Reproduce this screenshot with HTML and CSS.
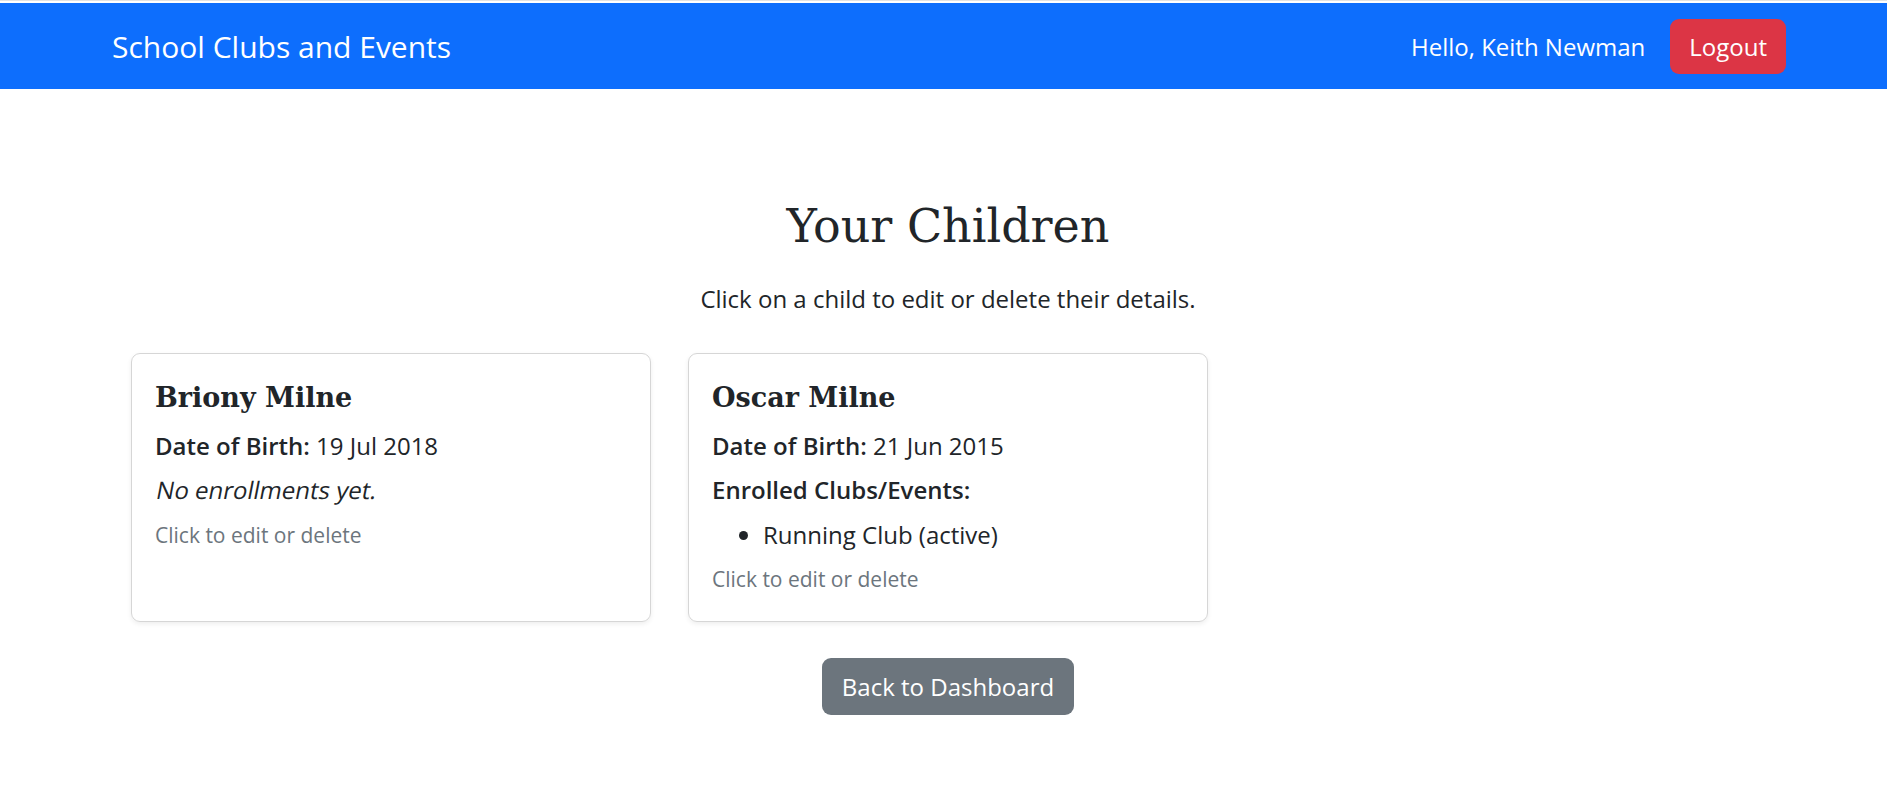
FILE: index.html
```html
<!DOCTYPE html>
<html lang="en">
<head>
<meta charset="utf-8">
<title>Your Children - School Clubs and Events</title>
<link rel="stylesheet" href="styles.css">
</head>
<body>
<nav class="navbar">
  <a class="brand" href="#">School Clubs and Events</a>
  <div class="nav-right">
    <span class="hello">Hello, Keith Newman</span>
    <button class="btn btn-danger">Logout</button>
  </div>
</nav>
<main class="container">
  <h1 class="page-title">Your Children</h1>
  <p class="lead">Click on a child to edit or delete their details.</p>
  <div class="cards">
    <div class="card">
      <h4 class="card-title">Briony Milne</h4>
      <p class="line"><strong>Date of Birth:</strong> 19 Jul 2018</p>
      <p class="line"><em class="slant">No enrollments yet.</em></p>
      <p class="hint">Click to edit or delete</p>
    </div>
    <div class="card">
      <h4 class="card-title">Oscar Milne</h4>
      <p class="line"><strong>Date of Birth:</strong> 21 Jun 2015</p>
      <p class="line"><strong>Enrolled Clubs/Events:</strong></p>
      <ul class="enrolled">
        <li>Running Club (active)</li>
      </ul>
      <p class="hint">Click to edit or delete</p>
    </div>
  </div>
  <div class="actions">
    <a class="btn btn-secondary" href="#">Back to Dashboard</a>
  </div>
</main>
</body>
</html>
```

FILE: styles.css
```css
html, body {
  margin: 0;
  padding: 0;
}
body {
  font-family: "Open Sans", "Noto Sans", sans-serif;
  font-size: 24px;
  color: #212529;
  background: #fff;
  border-top: 1px solid #e2e2e2;
  padding-top: 2px;
}
.navbar {
  height: 86px;
  background: #0d6efd;
  display: flex;
  align-items: center;
  justify-content: space-between;
  padding: 0 101px 0 112px;
}
.brand {
  color: #fff;
  text-decoration: none;
  font-size: 30px;
  line-height: 1.5;
}
.nav-right {
  display: flex;
  align-items: center;
  gap: 25px;
}
.hello {
  color: #fff;
  font-size: 24px;
}
.btn {
  display: inline-flex;
  align-items: center;
  justify-content: center;
  border: 0;
  color: #fff;
  font-family: "Open Sans", "Noto Sans", sans-serif;
  font-size: 24px;
  text-decoration: none;
  border-radius: 9px;
  box-sizing: border-box;
}
.btn-danger {
  background: #dc3545;
  height: 55px;
  padding: 0 19px;
}
.btn-secondary {
  background: #6c757d;
  height: 57px;
  padding: 0 20px;
}
.container {
  padding: 0 122px 0 131px;
}
.page-title {
  font-family: "DejaVu Serif", "Liberation Serif", serif;
  font-weight: 400;
  font-size: 46px;
  line-height: 1.2;
  text-align: center;
  margin: 110px 0 27px;
}
.lead {
  text-align: center;
  line-height: 36px;
  margin: 0 0 36px;
}
.cards {
  display: flex;
  gap: 37px;
}
.card {
  width: 520px;
  box-sizing: border-box;
  border: 1px solid #d6d6d6;
  border-radius: 9px;
  box-shadow: 0 2px 5px rgba(0, 0, 0, 0.07);
  padding: 28px 23px 26px;
}
.card-title {
  font-family: "DejaVu Serif", "Liberation Serif", serif;
  font-weight: 700;
  font-size: 27px;
  line-height: 1.2;
  margin: 0 0 13px;
}
.line {
  line-height: 36px;
  margin: 0 0 8.5px;
}
.line strong {
  font-weight: 600;
}
.slant {
  display: inline-block;
  font-style: normal;
  transform: skewX(-11deg);
  transform-origin: 0 76%;
}
.enrolled {
  margin: 0 0 11px;
  padding-left: 51px;
  line-height: 36px;
}
.hint {
  font-size: 21px;
  line-height: 31.5px;
  color: #6c757d;
  margin: 12px 0 0;
}
.enrolled + .hint {
  margin-top: 0;
}
.actions {
  display: flex;
  justify-content: center;
  margin-top: 36px;
}
```
